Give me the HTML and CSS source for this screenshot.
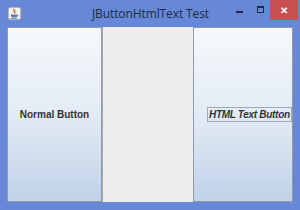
FILE: index.html
```html
<!DOCTYPE html>
<html lang="en">
<head>
    <meta charset="UTF-8">
    <title>JButtonHtmlText Test</title>
    <link rel="stylesheet" href="styles.css">
</head>
<body>
    <div class="window">
        <!-- 标题栏 -->
        <div class="titlebar">
            <div class="app-icon">
                <svg width="13" height="13" viewBox="0 0 13 13">
                    <rect x="0.5" y="0.5" width="12" height="12" rx="2" fill="#f4f4f4" stroke="#b8b8b8"/>
                    <path d="M6 2 C4 3.5 8 4.5 6 6.5" stroke="#e06020" stroke-width="1.2" fill="none"/>
                    <path d="M7.5 2.5 C6 4 9 4.5 7.5 6" stroke="#e88a30" stroke-width="1" fill="none"/>
                    <path d="M3 7.5 h6 v1.5 c0 1 -1 1.5 -3 1.5 s-3 -0.5 -3 -1.5 z" fill="#5a7ab0"/>
                    <path d="M9 8 c1.5 0 1.5 1.5 0 1.5" stroke="#5a7ab0" fill="none"/>
                    <rect x="2.5" y="11" width="7" height="0.8" fill="#5a7ab0"/>
                </svg>
            </div>
            <div class="title">JButtonHtmlText Test</div>
            <div class="controls">
                <div class="ctl ctl-min"><span class="min-bar"></span></div>
                <div class="ctl ctl-max"><span class="max-box"></span></div>
                <div class="ctl ctl-close">&#x2715;</div>
            </div>
        </div>

        <!-- 内容区 -->
        <div class="content">
            <div class="button">Normal Button</div>
            <div class="panel"></div>
            <div class="button html-button"><span class="focus">HTML Text Button</span></div>
        </div>
    </div>
</body>
</html>
```

FILE: styles.css
```css
* {
    box-sizing: border-box;
    margin: 0;
    padding: 0;
}

body {
    width: 300px;
    height: 210px;
    overflow: hidden;
    font-family: 'Liberation Sans', Arial, sans-serif;
}

/* 窗口外框 */
.window {
    width: 300px;
    height: 210px;
    background: #6688d6;
    padding: 0 7px 8px 7px;
    display: flex;
    flex-direction: column;
}

/* 标题栏 */
.titlebar {
    height: 27px;
    display: flex;
    align-items: flex-start;
}

.app-icon {
    margin-top: 6px;
    margin-left: 1px;
    width: 13px;
    height: 13px;
}

.title {
    flex: 1;
    text-align: center;
    font-family: 'Open Sans', 'DejaVu Sans', sans-serif;
    font-size: 12px;
    color: #1e2a44;
    line-height: 27px;
    padding-left: 52px;
    letter-spacing: -0.1px;
}

.controls {
    display: flex;
    margin-right: -5px;
}

.ctl {
    height: 20px;
    display: flex;
    align-items: center;
    justify-content: center;
}

.ctl-min {
    width: 22px;
}

.min-bar {
    width: 7px;
    height: 2px;
    background: #1e2a44;
    margin-top: 3px;
}

.ctl-max {
    width: 20px;
}

.max-box {
    width: 7px;
    height: 7px;
    border: 1px solid #1e2a44;
    border-top-width: 2px;
    margin-top: -2px;
}

.ctl-close {
    width: 28px;
    background: #c9504f;
    color: white;
    font-size: 10px;
    font-weight: bold;
}

/* 内容区 */
.content {
    flex: 1;
    display: flex;
    background: #eeeeee;
}

.button {
    width: 95px;
    border: 1px solid #8e9aae;
    background: linear-gradient(#f6f8fb, #e3ebf5 50%, #c0d2e8);
    display: flex;
    align-items: center;
    justify-content: center;
    font-size: 10px;
    font-weight: bold;
    color: #333333;
}

.panel {
    width: 91px;
    background: #eeeeee;
    border-left: 1px solid #a8a8a8;
}

.html-button {
    flex: 1;
    justify-content: flex-start;
    padding-left: 13px;
    overflow: hidden;
    white-space: nowrap;
}

.focus {
    font-style: italic;
    letter-spacing: -0.3px;
    border: 1px solid #a0a8b8;
    padding: 1px 1px 1px 1px;
}
```
